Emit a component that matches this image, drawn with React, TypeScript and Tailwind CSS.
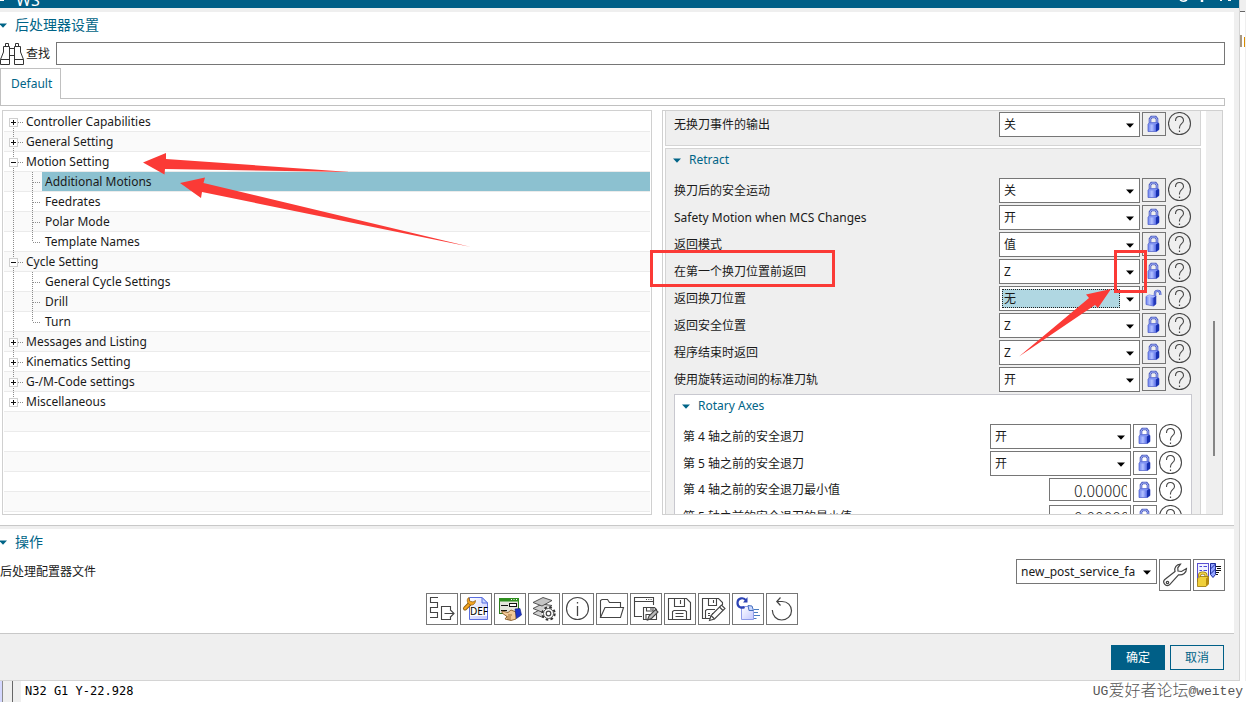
import { useState, type ReactNode } from "react";

const UI_FONT = "font-['Noto_Sans','Noto_Sans_CJK_SC',sans-serif]";

type TreeItem = {
  label: string;
  level: 0 | 1;
  open?: boolean;
  selected?: boolean;
  last?: boolean;
};

const TREE: TreeItem[] = [
  { label: "Controller Capabilities", level: 0 },
  { label: "General Setting", level: 0 },
  { label: "Motion Setting", level: 0, open: true },
  { label: "Additional Motions", level: 1, selected: true },
  { label: "Feedrates", level: 1 },
  { label: "Polar Mode", level: 1 },
  { label: "Template Names", level: 1, last: true },
  { label: "Cycle Setting", level: 0, open: true },
  { label: "General Cycle Settings", level: 1 },
  { label: "Drill", level: 1 },
  { label: "Turn", level: 1, last: true },
  { label: "Messages and Listing", level: 0 },
  { label: "Kinematics Setting", level: 0 },
  { label: "G-/M-Code settings", level: 0 },
  { label: "Miscellaneous", level: 0 },
];

const EMPTY_ROWS = [0, 1, 2, 3, 4];

type SettingRow = { id: string; label: string; value: string; unlocked?: boolean; focused?: boolean };

const RETRACT_ROWS: SettingRow[] = [
  { id: "safe-after", label: "换刀后的安全运动", value: "关" },
  { id: "safe-mcs", label: "Safety Motion when MCS Changes", value: "开" },
  { id: "mode", label: "返回模式", value: "值" },
  { id: "before-first", label: "在第一个换刀位置前返回", value: "Z" },
  { id: "tool-pos", label: "返回换刀位置", value: "无", unlocked: true, focused: true },
  { id: "safe-pos", label: "返回安全位置", value: "Z" },
  { id: "end", label: "程序结束时返回", value: "Z" },
  { id: "std-path", label: "使用旋转运动间的标准刀轨", value: "开" },
];

const AXIS_ROWS: SettingRow[] = [
  { id: "axis4", label: "第 4 轴之前的安全退刀", value: "开" },
  { id: "axis5", label: "第 5 轴之前的安全退刀", value: "开" },
];

const AXIS_VALUES = [
  { id: "axis4-min", label: "第 4 轴之前的安全退刀最小值" },
  { id: "axis5-min", label: "第 5 轴之前的安全退刀的最小值" },
];

function Caret({ className }: { className: string }) {
  return (
    <svg className={className} width="8" height="5" viewBox="0 0 8 5" aria-hidden="true">
      <path d="M0 0.5H8L4 4.8Z" fill="currentColor" />
    </svg>
  );
}

function LockIcon({ unlocked }: { unlocked?: boolean }) {
  if (unlocked) {
    return (
      <svg width="22" height="22" viewBox="0 0 22 22" aria-hidden="true">
        <path d="M12 10V6.2C12 3 17.2 3 17.2 6.6V8" fill="none" stroke="#4558c4" strokeWidth="2.4" />
        <path d="M12 10V6.2C12 3 17.2 3 17.2 6.6V8" fill="none" stroke="#b9c4fa" strokeWidth="0.8" />
        <path d="M3 9.5L6 8L13 9V17L10.5 19L3 17.5Z" fill="url(#lockBody)" stroke="#5162cf" strokeWidth="0.7" />
        <path d="M3 9.5L6 8L13 9L10.5 10.8Z" fill="#aebcff" />
        <path d="M10.5 10.8L13 9V17L10.5 19Z" fill="#2438b8" />
      </svg>
    );
  }
  return (
    <svg width="22" height="22" viewBox="0 0 22 22" aria-hidden="true">
      <path d="M7 10.5V6L8.5 4H12.5L14 6V10.5" fill="none" stroke="#4656b8" strokeWidth="2.6" />
      <path d="M7 10.5V6L8.5 4H12.5L14 6V10.5" fill="none" stroke="#aab8ff" strokeWidth="1" />
      <path d="M5 11L7 9.5H14.5L16 10.5V16.5L13.5 18.5H5Z" fill="url(#lockBody)" stroke="#4a5bc8" strokeWidth="0.7" />
      <path d="M13 11L16 10.2V16.5L13 18.5Z" fill="#1730b0" />
      <path d="M5.5 11L7 9.8H14.5L13 11.4H5.5Z" fill="#7f92f2" />
    </svg>
  );
}

function HelpIcon() {
  return (
    <svg width="24" height="24" viewBox="0 0 24 24" fill="none" stroke="#474747" aria-hidden="true">
      <circle cx="11.5" cy="11.5" r="11" strokeWidth="1.1" />
      <path d="M7.5 9C7.5 3.2 15.5 3.2 15.5 8.4C15.5 11.8 11.5 11.6 11.5 15.5V16.5" strokeWidth="1.1" />
      <path d="M11.5 18.5V20" strokeWidth="1.2" />
    </svg>
  );
}

function Combo({ id, value, focused, wide }: { id: string; value: string; focused?: boolean; wide?: boolean }) {
  return (
    <div className="relative flex h-[25px] w-[141px] shrink-0 border border-[#767676] bg-white p-0.5">
      <select
        id={id}
        defaultValue={value}
        className={
          focused
            ? "w-[118px] appearance-none border border-dotted border-[#222] bg-[#b0d7e2] pl-px text-xs leading-4 outline-none"
            : wide
              ? "w-[122px] appearance-none bg-white pl-0.5 text-xs leading-4 outline-none"
              : "w-[118px] appearance-none bg-white pl-0.5 text-xs leading-4 outline-none"
        }
      >
        <option>{value}</option>
      </select>
      <Caret className="pointer-events-none absolute top-2.5 right-[5px] text-black" />
    </div>
  );
}

function RowButtons({ unlocked }: { unlocked?: boolean }) {
  return (
    <>
      <button type="button" aria-label="锁定" className="flex size-6 items-center justify-center border border-[#767676]">
        <LockIcon unlocked={unlocked} />
      </button>
      <button type="button" aria-label="帮助" className="size-6">
        <HelpIcon />
      </button>
    </>
  );
}

function Setting({ row }: { row: SettingRow }) {
  return (
    <div className="flex h-[27px] shrink-0 items-start gap-0.5">
      <label htmlFor={row.id} className="flex-1 text-xs leading-[25px]">
        {row.label}
      </label>
      <Combo id={row.id} value={row.value} focused={row.focused} />
      <RowButtons unlocked={row.unlocked} />
    </div>
  );
}

function TreeGuides({ item, first, lastRow }: { item: TreeItem; first: boolean; lastRow: boolean }) {
  return (
    <svg
      className="h-5 w-[38px] shrink-0"
      viewBox="0 0 38 20"
      fill="none"
      stroke="#8c8c8c"
      strokeDasharray="1 1"
      shapeRendering="crispEdges"
      aria-hidden="true"
    >
      {!first && <path d="M9.5 0V10" />}
      {!lastRow && <path d="M9.5 10V20" />}
      {item.level === 0 ? (
        <>
          <path d="M14 10.5H19" />
          <rect x="5.5" y="6.5" width="8" height="8" fill="#fff" stroke="#cfcfcf" strokeDasharray="none" />
          <path d="M7 10.5H12" stroke="#111" strokeDasharray="none" />
          {!item.open && <path d="M9.5 8V13" stroke="#111" strokeDasharray="none" />}
        </>
      ) : (
        <>
          <path d={item.last ? "M28.5 0V10" : "M28.5 0V20"} />
          <path d="M29 10.5H37" />
        </>
      )}
    </svg>
  );
}

function Tree() {
  return (
    <ul role="tree" className="min-w-0 overflow-hidden border border-[#d0d0d0] bg-white p-px text-xs leading-[19px]">
      {TREE.map((item, i) => (
        <li
          key={item.label}
          role="treeitem"
          aria-selected={!!item.selected}
          className="flex h-5 border-b border-[#ebebeb] even:bg-[#fafafa]"
        >
          <TreeGuides item={item} first={i === 0} lastRow={i === TREE.length - 1} />
          {item.level === 0 ? (
            <span className="-ml-4">{item.label}</span>
          ) : (
            <span className={item.selected ? "flex-1 bg-[#8cc1d0] pl-[3px]" : "pl-[3px]"}>{item.label}</span>
          )}
        </li>
      ))}
      {EMPTY_ROWS.map((n) => (
        <li key={n} className="h-5 border-b border-[#ebebeb] even:bg-[#fafafa]" />
      ))}
    </ul>
  );
}

function GroupTitle({ children }: { children: ReactNode }) {
  return (
    <h3 className="mb-[7px] flex h-[22px] shrink-0 items-center gap-2 text-xs leading-4 text-[#006487]">
      <Caret className="-ml-px" />
      {children}
    </h3>
  );
}

function SettingsPanel() {
  return (
    <div className="flex min-w-0 overflow-hidden border border-[#d0d0d0] bg-white">
      <div className="flex min-w-0 flex-1 flex-col gap-0.5 overflow-hidden pl-0.5">
        <div className="h-[35px] shrink-0 border-x border-b border-[#d4d4d4] bg-[#efefef] px-2 pt-px">
          <Setting row={{ id: "no-change", label: "无换刀事件的输出", value: "关" }} />
        </div>
        <div className="flex shrink-0 flex-col border border-[#d4d4d4] bg-[#efefef] px-2">
          <GroupTitle>Retract</GroupTitle>
          {RETRACT_ROWS.map((row) => (
            <Setting key={row.id} row={row} />
          ))}
          <div className="flex flex-col border border-[#c8c8cf] bg-white px-2 pb-4">
            <GroupTitle>Rotary Axes</GroupTitle>
            {AXIS_ROWS.map((row) => (
              <Setting key={row.id} row={row} />
            ))}
            {AXIS_VALUES.map((row) => (
              <div key={row.id} className="flex h-[27px] shrink-0 items-start gap-0.5">
                <label htmlFor={row.id} className="flex-1 text-xs leading-6">
                  {row.label}
                </label>
                <div className="flex h-[23px] w-[82px] border border-[#767676] bg-white pr-[3px] pl-6">
                  <input
                    id={row.id}
                    defaultValue="0.000000"
                    className="w-full min-w-0 bg-transparent font-['Noto_Sans_CJK_SC',sans-serif] text-base leading-5 font-light text-[#222] outline-none"
                  />
                </div>
                <RowButtons />
              </div>
            ))}
          </div>
        </div>
      </div>
      <div className="ml-[5px] flex w-4 flex-col items-center bg-[#efefef]">
        <div className="flex-[210]" />
        <div className="w-0.5 flex-[135] bg-[#858585]" />
        <div className="flex-[58]" />
      </div>
    </div>
  );
}

const ICONS: { name: string; art: ReactNode }[] = [
  {
    name: "导出",
    art: (
      <g fill="none" stroke="#444" strokeWidth="1.1">
        <path d="M12 4.5H4.5V9.5H11.5V14.5H4.5V19.5H11.5V24.5H4" />
        <path d="M24.5 17V13.5H15.5V26.5H24.5V24M18.5 20.5H27.5M24 16.5L28 20.5L24 24.5" />
      </g>
    ),
  },
  {
    name: "DEF",
    art: (
      <g>
        <path d="M9.5 4.5H22L27.5 10V26.5H9.5Z" fill="url(#pageFill)" stroke="#5b6fe0" />
        <path d="M22 4.5V10H27.5Z" fill="#c9d8ff" stroke="#5b6fe0" />
        <path d="M5 15.5L9.5 11" stroke="#8a5a0a" strokeWidth="4" strokeLinecap="round" />
        <path d="M5 15.5L9.5 11" stroke="#f5a524" strokeWidth="2.4" strokeLinecap="round" />
        <path d="M9 4.5L9.5 8L13 9L15.5 7.5C15.5 12 11 13 8.8 11.2C6.5 8.5 7 5.5 9 4.5Z" fill="#f5a524" stroke="#8a5a0a" strokeWidth="0.7" />
        <rect x="10" y="14" width="17" height="9" fill="#fff" />
        <text x="10" y="22" fontSize="10" fontFamily="Noto Sans, sans-serif" fill="#000">DEF</text>
      </g>
    ),
  },
  {
    name: "编辑对话框",
    art: (
      <g>
        <rect x="5.5" y="5.5" width="19" height="15" fill="#e4e4dc" stroke="#2e7d1e" />
        <rect x="5" y="5" width="20" height="3.5" fill="#2f8f1f" />
        <path d="M17 6.5H18M19.5 6.5H20.5M22 6.5H23" stroke="#fff" />
        <path d="M7 12.5H14M7 17.5H13" stroke="#111" />
        <rect x="15.5" y="10.5" width="7" height="3" fill="#fff" stroke="#111" />
        <path d="M8 18L14 19.5L17 17L22 19V26L17 27.5L11 26L13 23.5L8 20Z" fill="#f3c896" stroke="#7a4b16" strokeWidth="0.8" />
        <path d="M12 24H17M13 26H17M14 22H18" stroke="#7a4b16" strokeWidth="0.7" />
        <path d="M21 16L26 15.5L27.5 22L22.5 25.5Z" fill="#1f35c8" stroke="#101c78" strokeWidth="0.6" />
      </g>
    ),
  },
  {
    name: "图层设置",
    art: (
      <g stroke="#444" strokeWidth="0.9">
        <path d="M5 20.5L14 15.5L24 17L15 24.5Z" fill="#d0d0d0" />
        <path d="M5 15.5L14 11L24 12.5L15 19.5Z" fill="#d0d0d0" />
        <path d="M5 9.5L15 4.5L24 7.5L14 13Z" fill="#c4c4c4" />
        <circle cx="20.5" cy="20.5" r="6.2" fill="#fff" stroke="#333" strokeWidth="2" strokeDasharray="2.6 2.27" />
        <circle cx="20.5" cy="20.5" r="5" fill="#fff" />
        <circle cx="20.5" cy="20.5" r="2.3" fill="#fff" strokeWidth="1.2" />
      </g>
    ),
  },
  {
    name: "信息",
    art: (
      <g fill="none" stroke="#444" strokeWidth="1.1">
        <circle cx="15.5" cy="15.5" r="11" />
        <path d="M15.5 13V23M15.5 9V10.5" strokeWidth="1.3" />
      </g>
    ),
  },
  {
    name: "打开",
    art: (
      <g fill="none" stroke="#444" strokeWidth="1.1">
        <path d="M4.5 24.5V7.5L6 6.5H11.5L13.5 9.5H24.5V14" />
        <path d="M4.5 24.5L9 14.5H27.5L24.5 24.5Z" />
      </g>
    ),
  },
  {
    name: "窗口另存",
    art: (
      <g fill="none" stroke="#444" strokeWidth="1.1">
        <path d="M12 23.5H4.5V4.5H23.5V12M4.5 8.5H23.5" />
        <path d="M16 6.5H22" strokeDasharray="1 1.3" />
        <path d="M13.5 14.5H24.5L26.5 16.5V26.5H13.5Z" fill="#fff" />
        <path d="M16.5 14.5V18H23V14.5M21 15V17M16 26V21.5H22" />
        <path d="M17.5 27L19 23L25.5 16.5L28 19L21.5 25.5Z" fill="#bbb" />
      </g>
    ),
  },
  {
    name: "保存",
    art: (
      <g fill="none" stroke="#444" strokeWidth="1.1">
        <path d="M4.5 5.5H22.5L26.5 9.5V26.5H4.5Z" />
        <path d="M10.5 5.5V13.5H20.5V5.5M16.5 7V11M8.5 26V18.5L10 17.5H21L22.500 18.500V26M11.500 20.500H19.500M11.500 23.500H19.500" />
      </g>
    ),
  },
  {
    name: "另存为",
    art: (
      <g fill="none" stroke="#444" strokeWidth="1.1">
        <path d="M12 25.5H4.5V5.5H20.5L24.5 9.5V12" />
        <path d="M10.5 5.5V12.5H18.5V5.5M15.5 7V10M7.5 25V17.5L9 16.5H17M10 20.5H12M14 20.5H16M10 22.5H12" />
        <path d="M11.5 27.5L13 22.5L23.5 12L27 15.500L16.500 26Z" fill="#fff" />
        <path d="M13 22.5L16.500 26M21.500 14L25 17.500" />
      </g>
    ),
  },
  {
    name: "刷新列表",
    art: (
      <g fill="none">
        <path d="M9.5 13.5H16L21.5 18.5V26.5H9.5Z" fill="url(#pageFill)" stroke="#8e9be8" />
        <path d="M16 12.5L17 17.5H21.5L20 13Z" fill="#c9d8ff" stroke="#456fc0" />
        <path d="M22 16.5H27M22 19.5H26M22 22.5H28M22 25.5H24.500" stroke="#4a7dc0" />
        <path d="M14 7.5C12 4 5.500 4.500 5.500 10C5.500 14.500 10 15.500 12.500 14" stroke="#2c43b4" strokeWidth="2.2" />
        <path d="M15.500 4V9.500H11Z" fill="#2c43b4" />
      </g>
    ),
  },
  {
    name: "重置",
    art: (
      <g fill="none" stroke="#444" strokeWidth="1.2">
        <path d="M11 8.5H16C21.5 8.5 25.5 12.5 25.5 17.8C25.5 23 21 27 15.7 27C10.5 27 6.5 23 6.3 17" />
        <path d="M14.5 4.5L10.8 8.5L14.5 12.5" />
      </g>
    ),
  },
];

function ToolButton({ name, children }: { name: string; children: ReactNode }) {
  return (
    <button type="button" aria-label={name} className="size-8 shrink-0 border border-[#767676] bg-white">
      <svg className="-m-px size-8" viewBox="0 0 32 32" aria-hidden="true">
        {children}
      </svg>
    </button>
  );
}

function SectionTitle({ children }: { children: ReactNode }) {
  return (
    <h2 className="flex h-[26px] shrink-0 items-center text-sm leading-5 text-[#006487]">
      <Caret className="-ml-px mr-2" />
      {children}
    </h2>
  );
}

function Annotations() {
  return (
    <svg className="pointer-events-none absolute top-0 left-0" width="1246" height="702" viewBox="0 0 1246 702" aria-hidden="true">
      <g fill="#fb3a36">
        <path d="M143 162.5L166 153V159L350 172L165 169L164.5 174.5Z" />
        <path d="M180 183L205 177.5L203.5 183L471 247L202 192L201 198Z" />
        <path d="M1111 289L1086 294.5L1089 298L1019 356.500L1095 305L1098 308Z" />
      </g>
      <g fill="none" stroke="#fb3a36" strokeWidth="3">
        <rect x="651.5" y="251.5" width="182" height="34" />
        <rect x="1115.5" y="251.5" width="30" height="40" />
      </g>
    </svg>
  );
}

export default function App() {
  const [query, setQuery] = useState("");

  return (
    <div className={`relative flex h-screen min-h-[600px] flex-col overflow-hidden bg-white text-[#1a1a1a] ${UI_FONT}`}>
      <svg className="absolute size-0" aria-hidden="true">
        <defs>
          <linearGradient id="lockBody" x1="0" x2="1" y1="0" y2="0">
            <stop offset="0" stopColor="#6f84ee" />
            <stop offset="0.35" stopColor="#b4c2ff" />
            <stop offset="0.75" stopColor="#4f64e4" />
            <stop offset="1" stopColor="#2a3fc4" />
          </linearGradient>
          <linearGradient id="pageFill" x1="0" x2="1" y1="0" y2="1">
            <stop offset="0" stopColor="#ffffff" />
            <stop offset="1" stopColor="#c3c8ff" />
          </linearGradient>
        </defs>
      </svg>

      <div className="flex min-h-0 flex-1">
        <main className="flex min-w-0 flex-1 flex-col border-r border-b border-[#d4d4d4] bg-[#efefef]">
          <header className="flex h-2 shrink-0 items-end justify-between overflow-hidden bg-[#005f87] pr-1 text-white">
            <span className="flex items-end gap-3">
              <svg width="4" height="8" viewBox="0 0 4 8" fill="none" stroke="#fff" aria-hidden="true">
                <path d="M0 0.5H4" />
              </svg>
              <span className="text-base leading-4">WS</span>
            </span>
            <svg className="shrink-0" width="56" height="8" viewBox="0 0 56 8" fill="none" stroke="#fff" aria-hidden="true">
              <path d="M1 0Q4 2.5 8 0" strokeWidth="1.5" />
              <path d="M23 0V2" strokeWidth="2.5" />
              <path d="M41 0H43M49 0H52" strokeWidth="2" />
            </svg>
          </header>

          <section className="mt-1 mr-[5px] flex min-h-0 flex-1 flex-col border-b border-[#c8c8c8] bg-white pb-2.5">
            <SectionTitle>后处理器设置</SectionTitle>
            <div className="mt-1 mr-[9px] flex h-[23px] shrink-0 items-center">
              <svg className="shrink-0" width="26" height="23" viewBox="0 0 26 23" fill="none" stroke="#333" aria-hidden="true">
                <path d="M0.5 17.5L3.5 10V4.5H9.5V22.5H0.5ZM0.5 17.5H9.5M5.5 4.5V1.5H8.5V4.5" />
                <path d="M23.5 17.5L20.5 10V4.5H14.5V22.5H23.5ZM23.5 17.5H14.5M18.5 4.5V1.5H15.5V4.5" />
                <path d="M9.5 6.5H14.5M9.5 13.5H14.5" />
              </svg>
              <label htmlFor="find" className="w-[30px] shrink-0 text-xs leading-[23px]">查找</label>
              <input
                id="find"
                value={query}
                onChange={(e) => setQuery(e.target.value)}
                className="h-[23px] min-w-0 flex-1 border border-[#767676] bg-white px-1 text-xs outline-none"
              />
            </div>

            <div className="mt-[3px] mr-[9px] flex shrink-0 flex-col items-start">
              <button type="button" className="relative -mb-px h-[31px] border-x border-t border-[#c0c0c0] bg-white pr-2 pl-2.5 text-xs leading-7 text-[#006487]">
                Default
              </button>
              <div className="h-2 w-full border border-[#c0c0c0]" />
            </div>

            <div className="mt-1 mr-[11px] ml-0.5 grid min-h-0 flex-1 grid-cols-[650fr_561fr] gap-2.5">
              <Tree />
              <SettingsPanel />
            </div>
          </section>

          <section className="mt-[3px] mr-[5px] flex h-[105px] shrink-0 flex-col border-b border-[#c8c8c8] bg-white pr-[9px]">
            <SectionTitle>操作</SectionTitle>
            <div className="mt-1 flex h-[34px] shrink-0 items-start gap-0.5">
              <label htmlFor="profile" className="flex-1 text-xs leading-[25px]">后处理配置器文件</label>
              <Combo id="profile" value="new_post_service_fa" wide />
              <ToolButton name="工具">
                <g fill="none" stroke="#444" strokeWidth="1.2">
                  <path d="M21.5 5.2C17.5 5.3 15 8.5 16 12.5L5.8 20.5C3 23 6.5 28.5 10.5 25.8L19.5 15.8C24 16.5 27.5 13.5 27.5 9.5L22.5 12.5L19 12L18.8 8.8Z" />
                  <circle cx="8.5" cy="23.5" r="1.2" />
                </g>
              </ToolButton>
              <ToolButton name="锁定文件">
                <rect x="4.5" y="4.5" width="11" height="18" fill="#f0f2ff" stroke="#5a4fd0" />
                <path d="M6.5 7.5H9M6.5 11.5H9M10.5 7.5H14M10.5 11.5H14" stroke="#4a46d8" />
                <path d="M6.500 18V16.500C6.500 13 13 13 13 16.500V18" fill="none" stroke="#9b7a08" strokeWidth="3" />
                <path d="M6.500 18V16.500C6.500 13 13 13 13 16.500V18" fill="none" stroke="#f2d44b" strokeWidth="1.500" />
                <path d="M4.5 19.500L7 17.5H15.5V25L13 27.5H4.5Z" fill="#f0d03a" stroke="#987405" strokeWidth="0.8" />
                <path d="M13 19.5L15.5 17.5V25L13 27.5Z" fill="#b88d0c" />
                <path d="M17.5 4.5H22.5V15.5L20 18.5L17.5 15.5Z" fill="#93a4ff" stroke="#1e2e9c" />
                <path d="M17.5 10L22.5 5M17.5 15L22.5 10" stroke="#1e2e9c" />
                <path d="M23 7.5H28M24 9.5H28M23 11.5H28M23 13.5H26M23 15.5H25" stroke="#111" />
              </ToolButton>
            </div>
            <div className="flex justify-center gap-0.5 pr-0.5">
              {ICONS.map((icon) => (
                <ToolButton key={icon.name} name={icon.name}>
                  {icon.art}
                </ToolButton>
              ))}
            </div>
          </section>

          <footer className="flex shrink-0 justify-end gap-[5px] pt-[11px] pr-[15px] pb-2.5 text-xs leading-4">
            <button type="button" className="h-[25px] w-[54px] border border-[#005f87] bg-[#005f87] text-white">确定</button>
            <button type="button" className="h-[25px] w-[54px] border border-[#005f87] bg-[#efefef] text-[#006487]">取消</button>
          </footer>
        </main>

        <aside className="flex w-1.5 flex-col border-r border-[#efefef] bg-white">
          <div className="h-3 shrink-0 border-b border-[#666] bg-[#efefef]" />
          <div className="mt-[23px] flex h-3 gap-0.5 overflow-hidden">
            <div className="w-0.5 bg-[#a8977f]" />
            <div className="mt-0.5 h-2.5 w-px bg-[#d98d00]" />
          </div>
        </aside>
      </div>

      <div className="flex h-[21px] shrink-0 items-stretch">
        <div className="w-0.5 bg-[#d5d8ff]" />
        <div className="w-px bg-[#8c8c8c]" />
        <div className="w-2.5 border-r border-[#666] bg-[#efefef]" />
        <div className="w-2 bg-[#efefef]" />
        <code className="flex-1 pl-1 font-['DejaVu_Sans_Mono',monospace] text-xs leading-5 text-black">N32 G1 Y-22.928</code>
        <p className="flex items-center pr-[3px] font-['Liberation_Mono','Noto_Sans_CJK_SC',monospace] text-[13px] leading-5 text-[#555]">
          UG<span className="text-base leading-5 font-light">爱好者论坛</span>@weitey
        </p>
      </div>

      <Annotations />
    </div>
  );
}
